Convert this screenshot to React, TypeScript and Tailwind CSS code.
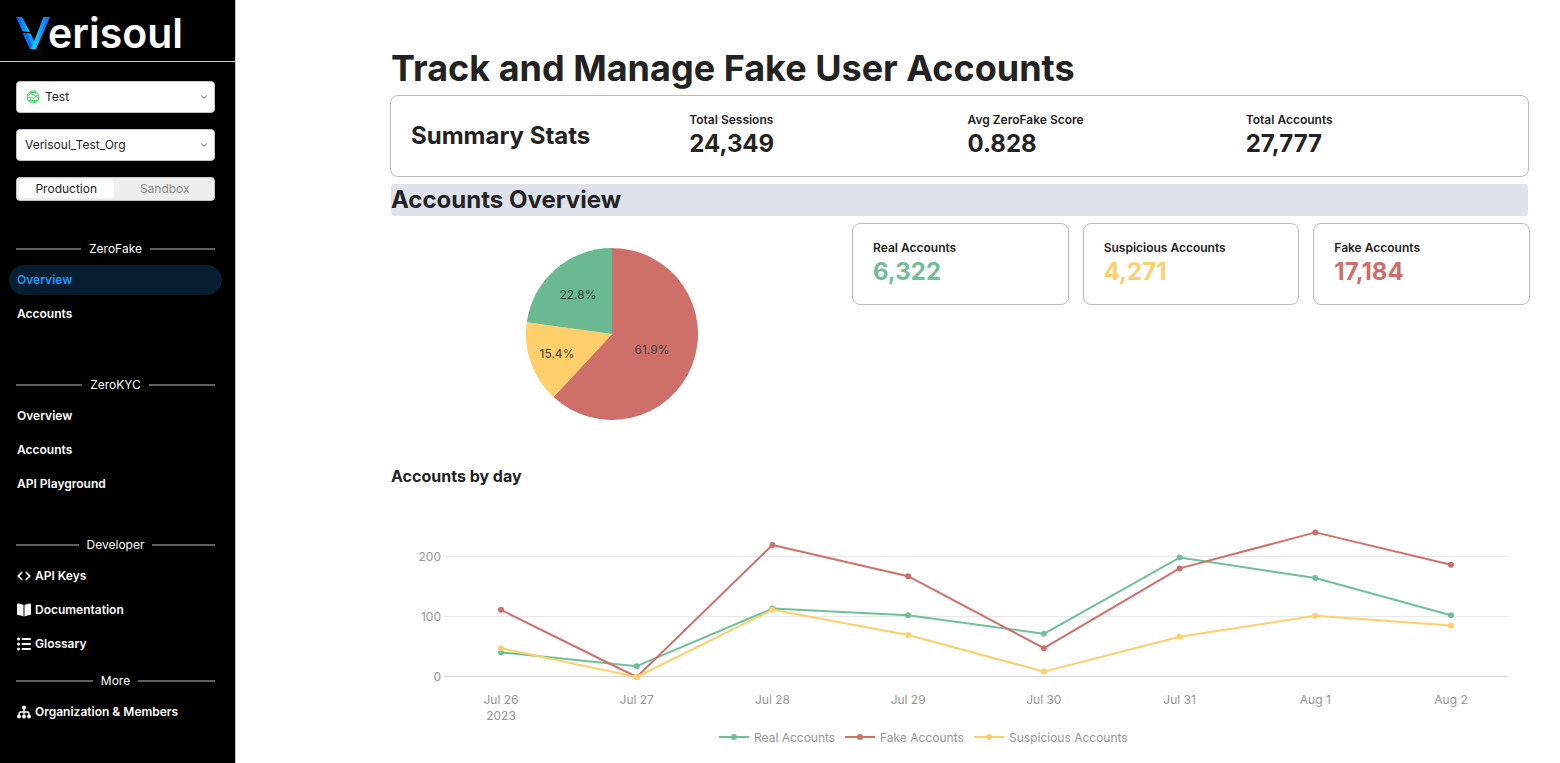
import type { ReactNode } from 'react'
import { ChevronDown, Code } from 'lucide-react'

const GREEN = '#6fc098'
const RED = '#cf6f69'
const YELLOW = '#ffcf6c'

const days = ['Jul 26', 'Jul 27', 'Jul 28', 'Jul 29', 'Jul 30', 'Jul 31', 'Aug 1', 'Aug 2']

const series = [
  { name: 'Real Accounts', color: GREEN, legendX: 329, values: [41, 18, 114, 103, 72, 199, 165, 103] },
  { name: 'Fake Accounts', color: RED, legendX: 455, values: [112, 0, 220, 168, 48, 181, 241, 187] },
  { name: 'Suspicious Accounts', color: YELLOW, legendX: 584, values: [48, 0, 112, 70, 9, 67, 102, 86] },
]

const slices = [
  { label: '61.9%', value: 61.9, color: RED, x: 126, y: 106 },
  { label: '15.4%', value: 15.3, color: YELLOW, x: 31, y: 110 },
  { label: '22.8%', value: 22.8, color: '#6bb993', x: 52, y: 51 },
]

function Logo() {
  return (
    <div className="flex items-center">
      <svg viewBox="0 0 34 32" className="h-8 w-[34px]" aria-hidden="true">
        <defs>
          <linearGradient id="left-arm" x1="0" y1="0.6" x2="1" y2="0.4">
            <stop offset="0.2" stopColor="#0a5cf5" />
            <stop offset="0.8" stopColor="#0cc0fb" />
          </linearGradient>
          <linearGradient id="right-arm" x1="0" y1="0.4" x2="1" y2="0.6">
            <stop offset="0.3" stopColor="#14c8fc" />
            <stop offset="0.75" stopColor="#0b74fd" />
          </linearGradient>
        </defs>
        <path d="M0 0h6l8 15-7.500-.5z" fill="url(#left-arm)" />
        <path d="M6.500 16l8 .5 4 8.500-1 7h-3.500z" fill="#0b6bfb" />
        <path d="M11 16.300l3.500.2 4 8.500-1.500 4z" fill="#0da2ff" />
        <path d="M27.500 0H34L20 32h-5z" fill="url(#right-arm)" />
      </svg>
      <span className="-ml-0.5 text-[41px] leading-8 font-semibold text-white">erisoul</span>
    </div>
  )
}

function GlobeIcon() {
  return (
    <svg viewBox="0 0 14 14" className="size-3.5" fill="none" stroke="#3fcf5c" aria-hidden="true">
      <circle cx="7" cy="7" r="6" />
      <path d="M4 2.500h6M2 5.500l3-2 7 4M1.500 7.500l6 .5 4.500-3M3 10.500h8M4 9l3 3.500 3-2" />
    </svg>
  )
}

function BookIcon() {
  return (
    <svg viewBox="0 0 14 14" className="size-3.5" fill="currentColor" aria-hidden="true">
      <path d="M0 1.500Q0 .5 1 .5q3.500 0 5.500 1.500v11.500Q4 12 1 12q-1 0-1-1z" />
      <path d="M14 1.500q0-1-1-1-3.500 0-5.500 1.500v11.500Q10 12 13 12q1 0 1-1z" />
    </svg>
  )
}

function ListIcon() {
  return (
    <svg viewBox="0 0 14 14" className="size-3.5" fill="currentColor" aria-hidden="true">
      <circle cx="1.500" cy="2" r="1.500" />
      <circle cx="1.500" cy="7" r="1.500" />
      <circle cx="1.500" cy="12" r="1.500" />
      <path d="M5.500 2H13M5.500 7H13M5.500 12H13" stroke="currentColor" strokeWidth="2" strokeLinecap="round" />
    </svg>
  )
}

function MembersIcon() {
  return (
    <svg viewBox="0 0 14 14" className="size-3.5" fill="currentColor" aria-hidden="true">
      <circle cx="7" cy="2.500" r="2" />
      <circle cx="2" cy="11.500" r="1.900" />
      <circle cx="7" cy="11.500" r="1.900" />
      <circle cx="12" cy="11.500" r="1.900" />
      <path d="M7 4v6M2 10V8.500Q2 7 3.500 7h7Q12 7 12 8.500V10" fill="none" stroke="currentColor" strokeWidth="1.300" />
    </svg>
  )
}

function Picker({ label, value, icon }: { label: string; value: string; icon?: ReactNode }) {
  return (
    <div className="relative">
      {icon && <span className="pointer-events-none absolute inset-y-0 left-2.5 flex items-center">{icon}</span>}
      <select
        aria-label={label}
        className={`block h-8 w-full appearance-none rounded border border-[#c4c4c4] bg-white text-xs text-[#222] ${icon ? 'pl-7' : 'pl-2'}`}
      >
        <option>{value}</option>
      </select>
      <ChevronDown
        className="pointer-events-none absolute inset-y-0 right-1.5 my-auto size-2.5 text-[#999]"
        strokeWidth={3}
      />
    </div>
  )
}

function NavSection({ title, className, children }: { title: string; className?: string; children: ReactNode }) {
  return (
    <section className={className}>
      <div className="flex h-6 items-center gap-2 pr-5 pl-4">
        <span className="h-0.5 flex-1 bg-[#5f5f5f]" />
        <h2 className="text-xs text-white">{title}</h2>
        <span className="h-0.5 flex-1 bg-[#5f5f5f]" />
      </div>
      <ul className="mt-1 flex flex-col gap-1 pr-[13px] pl-[9px]">{children}</ul>
    </section>
  )
}

function NavItem({ label, icon, active = false }: { label: string; icon?: ReactNode; active?: boolean }) {
  return (
    <li>
      <a
        href="#"
        className={`flex h-[30px] items-center gap-1 rounded-full px-2 text-xs font-semibold ${active ? 'bg-[#071e30] text-[#2196f3]' : 'text-white'}`}
      >
        {icon}
        {label}
      </a>
    </li>
  )
}

function Sidebar() {
  return (
    <aside className="w-[236px] shrink-0 border-r border-[#c9c9c9] bg-black">
      <div className="flex h-[62px] items-center border-b border-[#c9c9c9] px-4 pt-1">
        <Logo />
      </div>
      <div className="flex flex-col gap-4 pt-[19px] pr-5 pl-4">
        <Picker label="Project" value="Test" icon={<GlobeIcon />} />
        <Picker label="Organization" value="Verisoul_Test_Org" />
        <div className="flex h-6 gap-1 rounded border border-[#c4c4c4] bg-[#eee] p-0.5 text-xs">
          <button className="flex-1 rounded-sm bg-white text-[#222]">Production</button>
          <button className="flex-1 text-[#8a8a8a]">Sandbox</button>
        </div>
      </div>
      <nav className="pt-9">
        <NavSection title="ZeroFake" className="mb-11">
          <NavItem label="Overview" active />
          <NavItem label="Accounts" />
        </NavSection>
        <NavSection title="ZeroKYC" className="mb-[34px]">
          <NavItem label="Overview" />
          <NavItem label="Accounts" />
          <NavItem label="API Playground" />
        </NavSection>
        <NavSection title="Developer" className="mb-2.5">
          <NavItem label="API Keys" icon={<Code className="size-3.5" strokeWidth={3} />} />
          <NavItem label="Documentation" icon={<BookIcon />} />
          <NavItem label="Glossary" icon={<ListIcon />} />
        </NavSection>
        <NavSection title="More">
          <NavItem label="Organization & Members" icon={<MembersIcon />} />
        </NavSection>
      </nav>
    </aside>
  )
}

function Stat({ label, value, color = 'text-[#222]' }: { label: string; value: string; color?: string }) {
  return (
    <div>
      <div className="text-xs leading-4 font-semibold">{label}</div>
      <div className={`text-2xl font-bold ${color}`}>{value}</div>
    </div>
  )
}

function StatCard({ label, value, color }: { label: string; value: string; color: string }) {
  return (
    <div className="h-[82px] rounded-lg border border-[#bbb] px-5 pt-4">
      <Stat label={label} value={value} color={color} />
    </div>
  )
}

function PieChart() {
  const total = slices.reduce((sum, s) => sum + s.value, 0)
  const point = (share: number) => {
    const a = share * 2 * Math.PI
    return `${86 + 86 * Math.sin(a)} ${86 - 86 * Math.cos(a)}`
  }
  let start = 0
  return (
    <svg viewBox="0 0 172 172" className="size-[172px]" role="img" aria-label="Accounts by type">
      {slices.map((s) => {
        const from = start
        start += s.value / total
        return (
          <path
            key={s.label}
            d={`M86 86L${point(from)}A86 86 0 ${s.value > 50 ? 1 : 0} 1 ${point(start)}Z`}
            fill={s.color}
          />
        )
      })}
      {slices.map((s) => (
        <text key={s.label} x={s.x} y={s.y} textAnchor="middle" className="fill-[#3f3f3f] text-xs">
          {s.label}
        </text>
      ))}
    </svg>
  )
}

function LineChart() {
  const x = (i: number) => 111 + (i * 950) / 7
  const y = (v: number) => 187 - v * 0.6
  return (
    <svg viewBox="0 0 1139 273" className="block w-full text-xs" role="img" aria-label="Accounts by day">
      {[0, 100, 200].map((v) => (
        <g key={v}>
          <path d={`M54 ${y(v) - 0.5}H1118`} stroke={v === 0 ? '#d6d6d6' : '#e8e8e8'} />
          <text x={51} y={y(v) + 4} textAnchor="end" className="fill-[#959595]">
            {v}
          </text>
        </g>
      ))}
      {days.map((d, i) => (
        <text key={d} x={x(i)} y={214} textAnchor="middle" className="fill-[#959595]">
          {d}
        </text>
      ))}
      <text x={x(0)} y={230} textAnchor="middle" className="fill-[#959595]">
        2023
      </text>
      {series.map((s) => (
        <g key={s.name} fill={s.color}>
          <polyline
            points={s.values.map((v, i) => `${x(i)},${y(v)}`).join(' ')}
            fill="none"
            stroke={s.color}
            strokeWidth={2}
            strokeLinejoin="bevel"
          />
          {s.values.map((v, i) => (
            <circle key={i} cx={x(i)} cy={y(v)} r={3} />
          ))}
        </g>
      ))}
      {series.map((s) => (
        <g key={s.name}>
          <path d={`M${s.legendX} 247h30`} stroke={s.color} strokeWidth={2} />
          <circle cx={s.legendX + 15} cy={247} r={3} fill={s.color} />
          <text x={s.legendX + 35} y={252} className="fill-[#959595]">
            {s.name}
          </text>
        </g>
      ))}
    </svg>
  )
}

export default function App() {
  return (
    <div className="flex min-h-screen bg-white font-['Inter',sans-serif] text-[#222]">
      <Sidebar />
      <main className="min-w-0 flex-1 pt-12 pr-[31px] pl-[154px]">
        <h1 className="mx-px text-4xl leading-10 font-bold">Track and Manage Fake User Accounts</h1>
        <div className="mt-[7px] grid h-[82px] grid-cols-4 items-center gap-4 rounded-lg border border-[#bbb] px-5">
          <h2 className="text-2xl font-bold">Summary Stats</h2>
          <Stat label="Total Sessions" value="24,349" />
          <Stat label="Avg ZeroFake Score" value="0.828" />
          <Stat label="Total Accounts" value="27,777" />
        </div>
        <h2 className="mx-px mt-[7px] rounded bg-[#dee2ea] text-2xl font-bold">Accounts Overview</h2>
        <div className="mt-[7px] -mr-px grid grid-cols-[2fr_3fr] gap-2.5">
          <div className="flex h-[241px] justify-center pt-[25px] pr-2">
            <PieChart />
          </div>
          <div className="grid grid-cols-3 items-start gap-3.5">
            <StatCard label="Real Accounts" value="6,322" color="text-[#6fc098]" />
            <StatCard label="Suspicious Accounts" value="4,271" color="text-[#ffcf6c]" />
            <StatCard label="Fake Accounts" value="17,184" color="text-[#cf6f69]" />
          </div>
        </div>
        <h3 className="mx-px h-[26px] text-base font-bold">Accounts by day</h3>
        <LineChart />
      </main>
    </div>
  )
}
